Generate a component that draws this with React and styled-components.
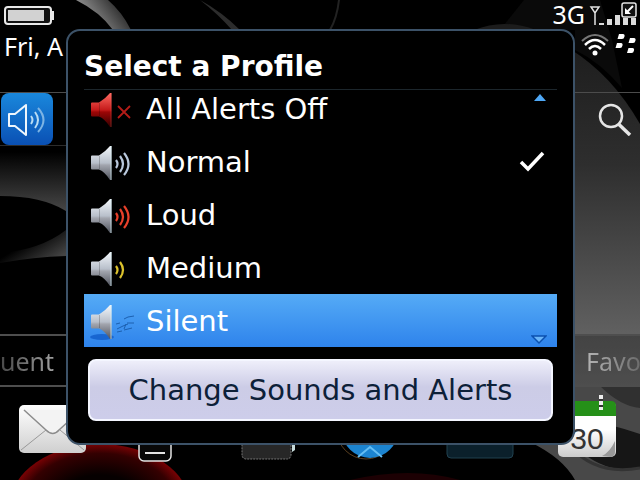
import { useState } from "react";
import styled, { createGlobalStyle } from "styled-components";

const GlobalStyle = createGlobalStyle`
  * {
    box-sizing: border-box;
  }

  body {
    margin: 0;
    background: #000;
    color: #fff;
    font-family: "Noto Sans", "Open Sans", sans-serif;
  }

  button {
    font: inherit;
    color: inherit;
    background: none;
    border: none;
    padding: 0;
    margin: 0;
    cursor: pointer;
  }

  svg {
    display: block;
  }
`;

const Screen = styled.div`
  position: relative;
  display: flex;
  flex-direction: column;
  min-height: 100vh;
  overflow: hidden;
`;

const Backdrop = styled.svg`
  position: absolute;
  inset: 0;
  width: 100%;
  height: 100%;
`;

const StatusBar = styled.header`
  position: relative;
  display: flex;
  justify-content: space-between;
  height: 92px;
  padding: 0 3px 0 4px;
  font-size: 25px;
  line-height: 28px;
`;

const StatusColumn = styled.div`
  display: flex;
  flex-direction: column;
  align-items: ${(props) => props.$align};
`;

const StatusRow = styled.div`
  display: flex;
  align-items: center;
  gap: ${(props) => props.$gap || "6px"};
  height: ${(props) => props.$height};
`;

const Toolbar = styled.nav`
  position: relative;
  display: flex;
  justify-content: space-between;
  align-items: center;
  height: 54px;
  padding: 0 8px 0 1px;
  border-top: 1px solid #4c4c4c;
  border-bottom: 1px solid #2c2c2c;
`;

const SoundButton = styled.button`
  width: 52px;
  height: 52px;
  border-radius: 8px;
  background: linear-gradient(#1a88dc, #0a50b4);
`;

const Wallpaper = styled.main`
  flex: 1;
`;

const Tabs = styled.nav`
  position: relative;
  display: flex;
  justify-content: space-between;
  align-items: center;
  height: 53px;
  border-top: 2px solid #4e4e4e;
  border-bottom: 2px solid #4e4e4e;
  background: rgba(0, 0, 0, 0.3);
`;

const Tab = styled.button`
  width: 54px;
  display: flex;
  justify-content: flex-start;
  font-size: 25px;
  line-height: 46px;
  white-space: nowrap;
  color: transparent;
  background: linear-gradient(to ${(props) => props.$fade}, ${(props) => props.$from}, ${(props) => props.$to});
  background-clip: text;
`;

const Dock = styled.footer`
  position: relative;
  display: grid;
  grid-template-columns: repeat(6, 1fr);
  justify-items: center;
  align-items: start;
  height: 93px;
  padding-top: 6px;
`;

const Dialog = styled.section`
  position: absolute;
  inset: 29px 65px 35px 66px;
  display: flex;
  flex-direction: column;
  padding: 0 16px 22px;
  border: 2px solid #3c5268;
  border-radius: 14px;
  background: #000;
  font-family: "DejaVu Sans", sans-serif;
`;

const DialogTitle = styled.h1`
  margin: 0;
  padding: 20px 0 6px;
  border-bottom: 1px solid #1c262c;
  font-size: 28px;
  line-height: 32px;
  font-weight: bold;
`;

const ProfileList = styled.div`
  position: relative;
  flex: 1;
  display: flex;
  flex-direction: column;
  justify-content: flex-end;
  overflow: hidden;
`;

const ProfileRow = styled.label`
  display: flex;
  align-items: center;
  flex-shrink: 0;
  gap: 12px;
  height: 53px;
  padding: 0 12px 0 6px;
  font-size: 29px;
  background: ${(props) => (props.$active ? "linear-gradient(#55abf6, #2e83ec)" : "transparent")};

  input {
    position: absolute;
    opacity: 0;
  }
`;

const ProfileName = styled.span`
  flex: 1;
`;

const ScrollArrow = styled.svg`
  position: absolute;
  right: 10px;
  ${(props) => props.$edge}: 2px;
`;

const ChangeButton = styled.button`
  height: 62px;
  margin: 12px 4px 0;
  padding-bottom: 1px;
  border: 2px solid #f4f6ff;
  border-radius: 8px;
  background: linear-gradient(#eeeefa, #cccce6 45%, #cdcdea);
  color: #0c2038;
  font-size: 29px;
  white-space: nowrap;
`;

const profiles = [
  { name: "All Alerts Off", kind: "off" },
  { name: "Normal", kind: "normal" },
  { name: "Loud", kind: "loud" },
  { name: "Medium", kind: "medium" },
  { name: "Silent", kind: "silent" },
];

const waveColors = { normal: "#b9c8dc", loud: "#e8402a", medium: "#dcc22c" };

function SpeakerIcon({ kind }) {
  const red = kind === "off";
  const id = `cone-${kind}`;
  return (
    <svg width="44" height="40" viewBox="0 0 44 40" aria-hidden="true">
      <defs>
        <linearGradient id={id} x1="0" y1="0" x2="0" y2="1">
          <stop offset="0" stopColor={red ? "#ff6a62" : "#f4f8fc"} />
          <stop offset="0.5" stopColor={red ? "#c41a1a" : "#b8bfca"} />
          <stop offset="0.56" stopColor={red ? "#9c0606" : "#a2a5ae"} />
          <stop offset="1" stopColor={red ? "#300" : "#50545e"} />
        </linearGradient>
      </defs>
      {kind === "silent" && <ellipse cx="12" cy="36" rx="12" ry="3" fill="#0b55c4" opacity="0.7" />}
      <path d="M1 14.500q0-1 1-1h7Q15 10 20 4h1.500v34H20Q15 30 9 27.500H2q-1 0-1-1z" fill={`url(#${id})`} />
      <path d="M9.500 14v13" stroke="#000" strokeOpacity="0.2" />
      <path d="M21 4v34" stroke={red ? "#ff7468" : "#d8f4fa"} strokeOpacity={red ? "0.3" : "0.7"} />
      {red && <path d="M28 17l12 12M40 17L28 29" stroke="#b41c18" strokeWidth="1.800" />}
      {waveColors[kind] && (
        <g fill="none" stroke={waveColors[kind]} strokeWidth="2.200">
          <path d="M26 18q3 4 0 8" />
          <path d="M30 14q6 8 0 16" />
          {kind !== "medium" && <path d="M34 11q9 11 0 22" />}
        </g>
      )}
      {kind === "silent" && (
        <path
          d="M26 23l4-1M34 18l4-2 6-1M37 22h7M27 28l6-3 5-2M27 31l5-1M34 29l8-2M36 23l-2 5"
          fill="none"
          stroke="#1c60b0"
        />
      )}
    </svg>
  );
}

function WallpaperArt() {
  return (
    <Backdrop viewBox="0 0 640 480" preserveAspectRatio="none" aria-hidden="true">
      <defs>
        <linearGradient id="ribbon" x1="0" x2="1" y1="0.6" y2="0.2">
          <stop offset="0.2" stopColor="#8c8c8c" />
          <stop offset="0.9" stopColor="#202020" />
        </linearGradient>
        <linearGradient id="right" x1="0" x2="0" y1="0" y2="1">
          <stop offset="0" stopColor="#1e1e1e" />
          <stop offset="0.33" stopColor="#2e2e2e" />
          <stop offset="1" stopColor="#747474" />
        </linearGradient>
        <linearGradient id="haze" x1="0" x2="0" y1="0" y2="1">
          <stop offset="0" stopColor="#000" />
          <stop offset="1" stopColor="#464646" />
        </linearGradient>
        <linearGradient id="glow" x1="0.1" x2="1" y1="0" y2="0.7">
          <stop offset="0.4" stopColor="#000" />
          <stop offset="1" stopColor="#444" />
        </linearGradient>
        <radialGradient id="red">
          <stop offset="0.5" stopColor="#060000" />
          <stop offset="0.85" stopColor="#340001" />
          <stop offset="1" stopColor="#780204" />
        </radialGradient>
      </defs>
      <path d="M76 0h32Q122 12 131 30h-18Q100 12 76 0z" fill="url(#ribbon)" />
      <path d="M200 0q22 12 40 30h-8Q218 14 200 0z" fill="#2c2c2c" />
      <path d="M339 0q-2 18-9 30" fill="none" stroke="#222" strokeWidth="2" />
      <path d="M524 0L500 30h75v20Q600 62 622 88L612 40 600 0z" fill="#0a0a0a" />
      <path d="M474 30q30-12 62 0z" fill="#1c1c1c" />
      <path d="M570 49Q612 75 640 124V400H570z" fill="url(#right)" />
      <path d="M0 152h66v59Q42 196 0 196z" fill="url(#haze)" />
      <path d="M66 230v26Q34 257 0 263v-10Q40 250 66 230z" fill="url(#glow)" />
      <ellipse cx="100" cy="506" rx="90" ry="62" fill="url(#red)" />
      <path d="M350 480q60-14 110 0z" fill="#1c0003" />
      <path d="M530 386h110v94h-65q-12-22-45-38z" fill="#484848" />
      <path d="M600 386q20 20 40 22v-22z" fill="#303030" />
      <path d="M606 424q16 4 34 10v34q-30 6-56-14z" fill="#161616" />
      <path d="M570 446q26 30 70 22" fill="none" stroke="#333" strokeWidth="3" />
    </Backdrop>
  );
}

function BatteryIcon() {
  return (
    <svg width="52" height="20" viewBox="0 0 52 20" aria-label="Battery">
      <rect x="1" y="1" width="46" height="17" rx="3" fill="#111" stroke="#e8e8e8" strokeWidth="2" />
      <rect x="4" y="4" width="36" height="11" fill="#d2d2d2" />
      <path d="M48 5h2v9h-2z" fill="#e8e8e8" />
    </svg>
  );
}

function SignalIcon() {
  return (
    <svg width="48" height="24" viewBox="0 0 48 24" aria-label="Signal">
      <path d="M2 5h8L6 11zM6 11v12" fill="none" stroke="#e4e4e4" strokeWidth="1.500" />
      <path d="M10 21h5v2h-5zM18 17h5v6h-5zM26 13h5v10h-5zM34 16h5v7h-5zM42 16h5v7h-5z" fill="#dcdcdc" />
      <rect x="33" y="1" width="14" height="14" rx="2" fill="#111" stroke="#e4e4e4" strokeWidth="1.500" />
      <path d="M44 4l-7 7" stroke="#fff" strokeWidth="2" />
      <path d="M36 6v6h6z" fill="#fff" />
    </svg>
  );
}

function WifiIcon() {
  return (
    <svg width="28" height="24" viewBox="0 0 28 24" aria-label="Wi-Fi">
      <g fill="none" strokeWidth="2.500">
        <path d="M1 9Q14-3 27 9" stroke="#777" strokeWidth="2" />
        <path d="M4 13q10-10 20 0" stroke="#fff" />
        <path d="M8 17q6-6 12 0" stroke="#fff" />
      </g>
      <circle cx="14" cy="21" r="2.500" fill="#fff" />
    </svg>
  );
}

function BerryIcon() {
  return (
    <svg width="22" height="22" viewBox="0 0 22 22" fill="#fff" aria-label="BlackBerry">
      <path d="M4 1h4q2 0 1.500 2.500T7 6H2.500zM2 10h4q2 0 1.500 2.500T5 15H.5zM15 5h4q2 0 1.500 2.500T18 10h-4.500zM13.500 15h4q2 0 1.500 2.500T16.500 20H12z" />
    </svg>
  );
}

function SoundIcon() {
  return (
    <svg width="52" height="52" viewBox="0 0 52 52" fill="none" stroke="#eef6fc" strokeWidth="2" aria-hidden="true">
      <path d="M8 21h6L25 12v30L14 33H8z" strokeLinejoin="round" />
      <path d="M30 23q3 4 0 8M34 19q6 8 0 16" stroke="#b9dcf4" />
      <path d="M37 15q11 12 0 24" stroke="#7db4e4" />
    </svg>
  );
}

function SearchIcon() {
  return (
    <svg width="34" height="34" viewBox="0 0 34 34" fill="none" stroke="#e6e6e6" aria-hidden="true">
      <circle cx="13" cy="14" r="11" strokeWidth="2.500" />
      <path d="M20.500 22L32 33" strokeWidth="3.500" />
    </svg>
  );
}

function DockIcon({ name }) {
  return (
    <svg width="70" height="72" viewBox="0 0 70 72" aria-hidden="true">
      {name === "Messages" && (
        <>
          <defs>
            <linearGradient id="mail" x1="0" x2="0" y1="0" y2="1">
              <stop offset="0" stopColor="#fff" />
              <stop offset="1" stopColor="#cfcfcf" />
            </linearGradient>
          </defs>
          <rect x="1" y="12" width="67" height="48" rx="5" fill="url(#mail)" />
          <path d="M3 57l25-20M66 57L42 37" stroke="#999" />
          <path d="M6 17l22 20q7 7 13 0l22-20" fill="#f3f3f3" stroke="#8c8c8c" strokeWidth="1.500" />
        </>
      )}
      {name === "Contacts" && (
        <>
          <rect x="14" y="10" width="32" height="58" rx="5" fill="#080808" stroke="#e4e4e4" strokeWidth="1.500" />
          <path d="M20 60h20" stroke="#e4e4e4" strokeWidth="2" />
        </>
      )}
      {name === "Folder" && (
        <>
          <rect x="10" y="20" width="49" height="46" rx="4" fill="#272727" stroke="#777" strokeDasharray="2 1" />
          <path d="M60 46v13l3-2V46z" fill="#c8dcdc" />
        </>
      )}
      {name === "Browser" && (
        <>
          <circle cx="28" cy="37" r="29" fill="none" stroke="#5b4020" />
          <circle cx="32" cy="37" r="28" fill="#1c84d0" />
          <path d="M20 64l12-10 12 10" fill="none" stroke="#65bdf2" strokeWidth="2" />
        </>
      )}
      {name === "Media" && <rect x="2" y="20" width="66" height="45" rx="4" fill="#0b202b" stroke="#21414f" />}
      {name === "Calendar" && (
        <>
          <defs>
            <linearGradient id="page" x1="0" x2="0" y1="0" y2="1">
              <stop offset="0.5" stopColor="#fff" />
              <stop offset="1" stopColor="#ccc" />
            </linearGradient>
          </defs>
          <rect x="6" y="9" width="58" height="55" rx="5" fill="url(#page)" />
          <path d="M6 23V13q0-5 5-5h48q5 0 5 5v10z" fill="#259018" />
          <path d="M20 2h3v15h-3zM47 2h4v15h-4z" fill="#eee" />
          <path d="M47 7h4M47 13h4" stroke="#333" strokeWidth="2" />
          <path d="M50 63q8-4 13-15v11q0 4-4 5z" fill="#999" />
          <text x="35" y="56" textAnchor="middle" fontFamily="Liberation Sans, sans-serif" fontSize="30" fill="#333">
            30
          </text>
        </>
      )}
    </svg>
  );
}

const dockItems = ["Messages", "Contacts", "Folder", "Browser", "Media", "Calendar"];

export default function App() {
  const [focused, setFocused] = useState("Silent");
  const current = "Normal";

  return (
    <Screen>
      <GlobalStyle />
      <WallpaperArt />
      <StatusBar>
        <StatusColumn $align="flex-start">
          <StatusRow $height="32px">
            <BatteryIcon />
          </StatusRow>
          <StatusRow $height="28px">Fri, A</StatusRow>
        </StatusColumn>
        <StatusColumn $align="flex-end">
          <StatusRow $height="28px" $gap="4px">
            3G
            <SignalIcon />
          </StatusRow>
          <StatusRow $height="32px">
            <WifiIcon />
            <BerryIcon />
          </StatusRow>
        </StatusColumn>
      </StatusBar>
      <Toolbar>
        <SoundButton aria-label="Sounds">
          <SoundIcon />
        </SoundButton>
        <button aria-label="Search">
          <SearchIcon />
        </button>
      </Toolbar>
      <Wallpaper />
      <Tabs>
        <Tab $fade="right" $from="#484848" $to="#a0a0a0">
          uent
        </Tab>
        <Tab $fade="right" $from="#b4b4b4" $to="#6c6c6c">
          Favo
        </Tab>
      </Tabs>
      <Dock>
        {dockItems.map((name) => (
          <button key={name} aria-label={name}>
            <DockIcon name={name} />
          </button>
        ))}
      </Dock>

      <Dialog role="dialog" aria-labelledby="dialog-title">
        <DialogTitle id="dialog-title">Select a Profile</DialogTitle>
        <ProfileList role="radiogroup" aria-labelledby="dialog-title">
          {profiles.map(({ name, kind }) => (
            <ProfileRow key={name} $active={focused === name}>
              <input type="radio" name="profile" checked={focused === name} onChange={() => setFocused(name)} />
              <SpeakerIcon kind={kind} />
              <ProfileName>{name}</ProfileName>
              {name === current && (
                <svg width="26" height="22" viewBox="0 0 26 22" aria-label="Current profile">
                  <path d="M2 11l7 7L24 2" fill="none" stroke="#fff" strokeWidth="3.500" />
                </svg>
              )}
            </ProfileRow>
          ))}
          <ScrollArrow $edge="top" width="14" height="10" viewBox="0 0 14 10">
            <path d="M1 9l6-7 6 7z" fill="#4fa8f6" />
          </ScrollArrow>
          <ScrollArrow $edge="bottom" width="16" height="10" viewBox="0 0 16 10">
            <path d="M1 1h14L8 8z" fill="#69b4f8" stroke="#0b50b0" strokeWidth="1.500" />
          </ScrollArrow>
        </ProfileList>
        <ChangeButton>Change Sounds and Alerts</ChangeButton>
      </Dialog>
    </Screen>
  );
}
